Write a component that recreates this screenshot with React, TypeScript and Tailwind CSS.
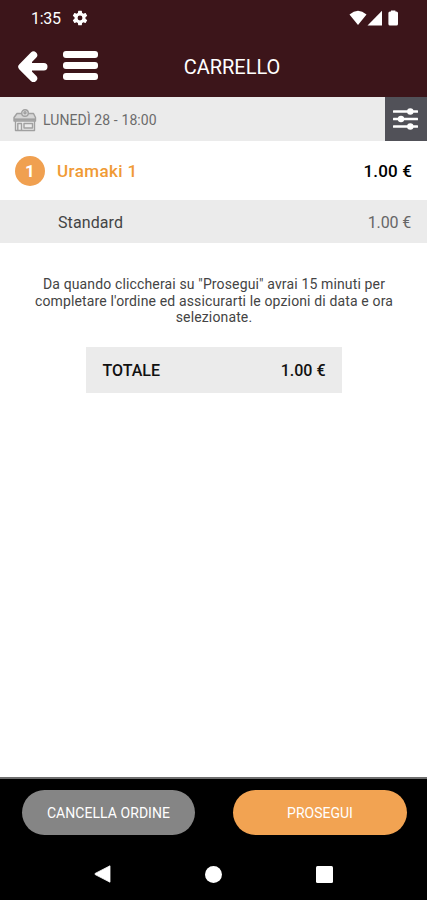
import React from 'react';

const StatusBar = () => (
  <div className="flex h-9 items-center justify-between pr-[28px] pl-[31px] text-white">
    <div className="flex items-center gap-[11px]">
      <span className="pt-px text-[16px] leading-none tracking-[-0.3px]">1:35</span>
      <svg className="h-[16px] w-[16px]" viewBox="1.5 1.5 21 21" fill="currentColor">
        <path d="M19.14 12.94c.04-.3.06-.61.06-.94s-.02-.64-.07-.94l2.03-1.58a.49.49 0 0 0 .12-.61l-1.92-3.32a.49.49 0 0 0-.59-.22l-2.39.96a7 7 0 0 0-1.62-.94l-.36-2.54a.48.48 0 0 0-.48-.41h-3.84a.47.47 0 0 0-.47.41l-.36 2.54c-.59.24-1.13.57-1.62.94l-2.39-.96a.48.48 0 0 0-.59.22L2.74 8.87a.47.47 0 0 0 .12.61l2.03 1.58c-.05.3-.09.63-.09.94s.02.64.07.94l-2.03 1.58a.49.49 0 0 0-.12.61l1.92 3.32c.12.22.37.29.59.22l2.39-.96c.5.38 1.03.7 1.62.94l.36 2.54c.05.24.24.41.48.41h3.84c.24 0 .44-.17.47-.41l.36-2.54a7 7 0 0 0 1.62-.94l2.39.96c.22.08.47 0 .59-.22l1.92-3.32a.47.47 0 0 0-.12-.61zM12 15.2a3.2 3.2 0 1 1 0-6.4 3.2 3.2 0 0 1 0 6.4z" />
      </svg>
    </div>
    <svg className="h-4 w-[50px]" viewBox="0 0 50 16" fill="currentColor">
      <path d="M0.5 4.4Q9 -2.8 17.5 4.4L9 15z" />
      <path d="M33 0.8V15.5H18.5z" />
      <path d="M42 1.5V0.5h4.400v1h1q1.600 0 1.600 1.600v10.800q0 1.600-1.600 1.600h-6.400q-1.600 0-1.600-1.600v-10.800q0-1.600 1.600-1.600z" />
    </svg>
  </div>
);

const Header = () => (
  <header className="h-[97px] bg-[#3c151a] text-white">
    <StatusBar />
    <div className="grid h-[60px] grid-cols-[1fr_auto_1fr] items-center pl-[18px]">
      <div className="flex items-center gap-[15px]">
        <button aria-label="Indietro">
          <svg className="h-8 w-[30px]" viewBox="0 0 30 32" fill="none" stroke="currentColor" strokeWidth="7.4" strokeLinecap="round" strokeLinejoin="round">
            <path d="M15.5 5.2L4 16.8L15.5 28.4M6 16.8H25.8" />
            <path d="M5 16.8L14 8V25.600z" fill="currentColor" stroke="none" />
          </svg>
        </button>
        <button aria-label="Menu" className="-mt-px flex flex-col gap-[4px]">
          <span className="h-[7px] w-[35px] rounded-[3px] bg-white" />
          <span className="h-[7px] w-[35px] rounded-[3px] bg-white" />
          <span className="h-[7px] w-[35px] rounded-[3px] bg-white" />
        </button>
      </div>
      <h1 className="pt-px pl-[19px] text-[20px] leading-none">CARRELLO</h1>
    </div>
  </header>
);

// Small storefront used next to the pickup slot
const ShopIcon = () => (
  <svg className="h-[23px] w-6" viewBox="0 0 24 23" fill="none" stroke="#a0a0a0" strokeWidth="1.4" strokeLinejoin="round">
    <path d="M4 4.500H20.500L22.500 8.500V12H1V8.500z" fill="#d6d6d6" />
    <path d="M1 10.500H23" strokeWidth="2.200" />
    <circle cx="12" cy="4" r="3.300" fill="#dadada" />
    <circle cx="12" cy="3.800" r="1" />
    <path d="M2.500 12V21.500H21.500V12M4.800 14.500H8.500V21.500H4.800zM11 14.500H19.500V19H11z" />
  </svg>
);

const SlidersIcon = () => (
  <svg className="h-6 w-[26px]" viewBox="0 0 26 24" fill="white">
    <rect x="0" y="3.2" width="25" height="2.6" rx="0.5" />
    <rect x="0" y="10.7" width="25" height="2.6" rx="0.5" />
    <rect x="0" y="18.2" width="25" height="2.6" rx="0.5" />
    <circle cx="17.3" cy="4.5" r="3.2" />
    <circle cx="8" cy="12" r="3.2" />
    <circle cx="17.3" cy="19.5" r="3.2" />
  </svg>
);

const NavBar = () => (
  <nav className="flex items-center justify-between pt-[30px] pr-[94px] pl-[94px]">
    <svg className="h-[18px] w-[17px]" viewBox="0 0 17 18" fill="white">
      <path d="M16 0.8V17.2L1.2 9.6Q0.4 9 1.2 8.4z" stroke="white" strokeWidth="0.8" strokeLinejoin="round" />
    </svg>
    <span className="size-[17px] rounded-full bg-white" />
    <span className="size-[17px] rounded-[1.5px] bg-white" />
  </nav>
);

export default function App() {
  return (
    <div className="flex h-[900px] w-[427px] flex-col overflow-hidden bg-white font-[Roboto,sans-serif] text-black">
      <Header />

      <main className="flex-1">
        <div className="flex h-[44px] items-stretch justify-between bg-[#ebebeb]">
          <div className="flex items-center gap-[6px] pt-[2px] pl-[13px] text-[#6b6b6b]">
            <ShopIcon />
            <span className="text-[14px] leading-none tracking-[0.1px]">LUNEDÌ 28 - 18:00</span>
          </div>
          <button aria-label="Opzioni" className="flex w-[42px] items-center justify-center bg-[#515158]">
            <SlidersIcon />
          </button>
        </div>

        <div className="flex h-[59px] items-center pr-[15px] pl-[15px]">
          <span className="flex size-[30px] items-center justify-center rounded-full bg-[#f0a050] pt-[2px] text-[17px] font-bold text-white">1</span>
          <span className="ml-[12px] flex-1 pt-[2px] text-[17px] font-medium tracking-[0.4px] text-[#f09a35]">Uramaki 1</span>
          <span className="pt-[2px] text-[17px] font-medium tracking-[0.15px]">1.00 €</span>
        </div>

        <div className="flex h-[43px] items-center justify-between bg-[#ebebeb] pt-[3px] pr-[16px] pl-[58px] text-[16px]">
          <span className="tracking-[0.1px] text-[#444]">Standard</span>
          <span className="tracking-[-0.15px] text-[#666]">1.00 €</span>
        </div>

        <p className="mx-auto mt-[33px] w-[370px] pl-px text-center text-[14px] leading-[16.5px] tracking-[0.14px] text-[#444]">
          Da quando cliccherai su "Prosegui" avrai 15 minuti per
          <br />
          completare l'ordine ed assicurarti le opzioni di data e ora
          <br />
          selezionate.
        </p>

        <div className="mx-auto mt-[21px] flex h-[46px] w-[256px] items-center justify-between bg-[#ebebeb] pt-[2px] pr-[16px] pl-[17px] text-[16px] font-medium text-[#111]">
          <span>TOTALE</span>
          <span>1.00 €</span>
        </div>
      </main>

      <footer className="h-[123px] border-t-2 border-[#6e6e6e] bg-black">
        <div className="flex justify-between pt-[11px] pr-[20px] pl-[22px] text-[14px] text-white">
          <button className="h-[45px] w-[173px] rounded-full bg-[#858585] pt-[2px] tracking-[0.05px]">CANCELLA ORDINE</button>
          <button className="h-[45px] w-[174px] rounded-full bg-[#f2a352] pt-[2px]">PROSEGUI</button>
        </div>
        <NavBar />
      </footer>
    </div>
  );
}
